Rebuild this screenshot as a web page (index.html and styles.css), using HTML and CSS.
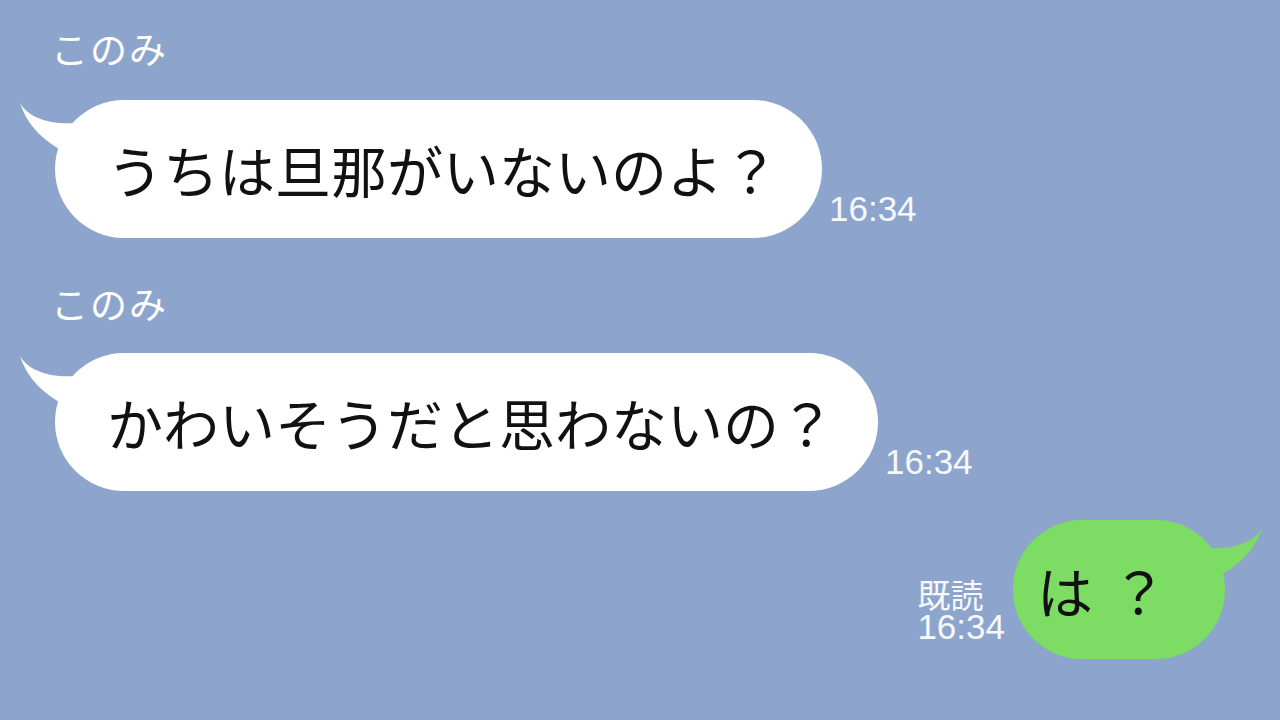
FILE: index.html
```html
<!DOCTYPE html>
<html lang="ja">
<head>
    <meta charset="UTF-8">
    <title>トーク</title>
    <link rel="stylesheet" href="styles.css">
</head>
<body>
    <div class="chat">
        <div class="msg msg-in">
            <div class="name">このみ</div>
            <div class="row">
                <div class="bubble bubble-in">
                    <svg class="tail tail-left" viewBox="0 0 60 60"><path d="M0 0 C8 14 28 22 56 20 L56 58 C40 44 12 36 0 0 Z"/></svg>
                    <span>うちは旦那がいないのよ？</span>
                </div>
                <div class="meta"><span class="time">16:34</span></div>
            </div>
        </div>
        <div class="msg msg-in second">
            <div class="name">このみ</div>
            <div class="row">
                <div class="bubble bubble-in">
                    <svg class="tail tail-left" viewBox="0 0 60 60"><path d="M0 0 C8 14 28 22 56 20 L56 58 C40 44 12 36 0 0 Z"/></svg>
                    <span>かわいそうだと思わないの？</span>
                </div>
                <div class="meta"><span class="time">16:34</span></div>
            </div>
        </div>
        <div class="msg msg-out">
            <div class="row">
                <div class="meta">
                    <span class="read">既読</span>
                    <span class="time">16:34</span>
                </div>
                <div class="bubble bubble-out">
                    <svg class="tail tail-right" viewBox="0 0 60 60"><path d="M60 0 C52 14 32 22 4 20 L4 58 C20 44 48 36 60 0 Z"/></svg>
                    <span>は？</span>
                </div>
            </div>
        </div>
    </div>
</body>
</html>
```

FILE: styles.css
```css
body {
    margin: 0;
    padding: 0;
    width: 1280px;
    height: 720px;
    overflow: hidden;
    background-color: #8da5cc;
    font-family: "Noto Sans CJK JP", "Noto Sans", sans-serif;
}

.chat {
    display: flex;
    flex-direction: column;
    padding: 26px 55px 0 55px;
}

.name {
    font-size: 37px;
    line-height: 44px;
    color: #fff;
    margin-left: -4px;
    letter-spacing: 2px;
}

.row {
    display: flex;
    align-items: flex-end;
}

.msg-in .row {
    margin-top: 30px;
}

.msg-in.second {
    margin-top: 43px;
}

.msg-in.second .row {
    margin-top: 28px;
}

.msg-out {
    margin-top: 29px;
}

.msg-out .row {
    justify-content: flex-end;
}

.bubble {
    position: relative;
    height: 138px;
    border-radius: 69px;
    display: flex;
    align-items: center;
    font-size: 56px;
    line-height: 1;
    color: #111;
}

.bubble span {
    position: relative;
}

.bubble-in {
    background: #fff;
    padding: 0 43px 0 52px;
}

.bubble-out {
    height: 139px;
    background: #7ddc63;
    padding: 0 40px 0 24px;
    letter-spacing: 18px;
}

.tail {
    position: absolute;
    top: 3px;
    width: 60px;
    height: 60px;
}

.tail-left {
    left: -35px;
    fill: #fff;
}

.tail-right {
    right: -37px;
    top: 8px;
    fill: #7ddc63;
}

.meta {
    display: flex;
    flex-direction: column;
    color: #f6f8fb;
    margin-bottom: 12px;
}

.msg-in .meta {
    margin-left: 7px;
}

.msg-out .meta {
    margin-right: 8px;
    margin-bottom: 15px;
}

.time {
    font-family: "Liberation Sans", Arial, sans-serif;
    font-size: 35px;
    line-height: 35px;
}

.read {
    font-size: 33px;
    line-height: 30px;
}
```
